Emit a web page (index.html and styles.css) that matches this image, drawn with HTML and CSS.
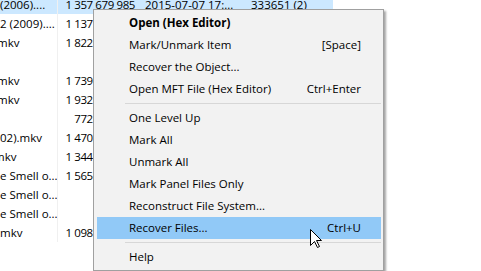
FILE: index.html
```html
<!DOCTYPE html>
<html lang="en">
<head>
    <meta charset="UTF-8">
    <title>Recover Files</title>
    <link rel="stylesheet" href="styles.css">
</head>
<body>
    <div class="file-list">
        <div class="row selected">
            <span class="name">(2006)....</span>
            <span class="size">1 357 679 985</span>
            <span class="date">2015-07-07 17:...</span>
            <span class="id">333651 (2)</span>
        </div>
        <div class="row">
            <span class="name">2 (2009)....</span>
            <span class="size">1 137 458 112</span>
        </div>
        <div class="row">
            <span class="name"><span class="cut">mkv</span></span>
            <span class="size">1 822 305 536</span>
        </div>
        <div class="row">
            <span class="name"></span>
            <span class="size"></span>
        </div>
        <div class="row">
            <span class="name"><span class="cut">mkv</span></span>
            <span class="size">1 739 210 752</span>
        </div>
        <div class="row">
            <span class="name"><span class="cut">mkv</span></span>
            <span class="size">1 932 476 416</span>
        </div>
        <div class="row">
            <span class="name"></span>
            <span class="size">772 403 200</span>
        </div>
        <div class="row">
            <span class="name">02).mkv</span>
            <span class="size">1 470 103 552</span>
        </div>
        <div class="row">
            <span class="name"><span class="cut-more">mkv</span></span>
            <span class="size">1 344 606 208</span>
        </div>
        <div class="row">
            <span class="name">e Smell o...</span>
            <span class="size">1 565 024 256</span>
        </div>
        <div class="row">
            <span class="name">e Smell o...</span>
            <span class="size">245 760</span>
        </div>
        <div class="row">
            <span class="name">e Smell o...</span>
            <span class="size">245 760</span>
        </div>
        <div class="row">
            <span class="name">mkv</span>
            <span class="size">1 098 514 432</span>
        </div>
    </div>

    <!-- context menu -->
    <div class="context-menu">
        <div class="menu-item default"><span>Open (Hex Editor)</span></div>
        <div class="menu-item"><span>Mark/Unmark Item</span><span class="key">[Space]</span></div>
        <div class="menu-item"><span>Recover the Object...</span></div>
        <div class="menu-item"><span>Open MFT File (Hex Editor)</span><span class="key">Ctrl+Enter</span></div>
        <div class="separator"></div>
        <div class="menu-item"><span>One Level Up</span></div>
        <div class="menu-item"><span>Mark All</span></div>
        <div class="menu-item"><span>Unmark All</span></div>
        <div class="menu-item"><span>Mark Panel Files Only</span></div>
        <div class="menu-item"><span>Reconstruct File System...</span></div>
        <div class="menu-item active"><span>Recover Files...</span><span class="key">Ctrl+U</span></div>
        <div class="separator"></div>
        <div class="menu-item"><span>Help</span></div>
    </div>

    <svg class="cursor" width="13" height="20" viewBox="0 0 13 20">
        <path d="M0.5 0.5 L0.5 16.5 L4.5 12.5 L7.5 18.5 L9.5 17.5 L6.5 11.5 L11.5 11.5 Z" fill="#fff" stroke="#000" stroke-width="1" stroke-linejoin="miter"/>
    </svg>
</body>
</html>
```

FILE: styles.css
```css
body {
    margin: 0;
    font-family: "Open Sans", "Noto Sans", sans-serif;
    font-size: 11.5px;
    color: #000;
    background-color: #fff;
    overflow: hidden;
}

.file-list {
    margin-top: -5px;
}

.row {
    display: grid;
    grid-template-columns: 58px 77px 114px 84px;
    width: 333px;
    height: 19px;
    line-height: 19px;
    white-space: nowrap;
}

.row.selected {
    background-color: #cce8ff;
}

.name {
    overflow: hidden;
    border-right: 1px solid #f0f0f0;
}

.cut {
    margin-left: -3px;
}

.cut-more {
    margin-left: -6px;
}

.size {
    text-align: right;
    letter-spacing: -0.4px;
}

.date {
    padding-left: 10px;
}

.id {
    padding-left: 2px;
}

.context-menu {
    position: absolute;
    left: 93px;
    top: 9px;
    width: 285px;
    padding: 2px;
    background-color: #f2f2f2;
    border: 1px solid #a0a0a0;
    box-shadow: 2px 2px 2px rgba(0, 0, 0, 0.35);
}

.menu-item {
    display: flex;
    justify-content: space-between;
    height: 22px;
    line-height: 22px;
    padding: 0 20px 0 32px;
    margin-left: 1px;
}

.menu-item.default {
    font-weight: bold;
}

.menu-item.active {
    background-color: #91c9f7;
}

.separator {
    height: 1px;
    margin: 3px 0 3px 29px;
    background-color: #d7d7d7;
}

.cursor {
    position: absolute;
    left: 310px;
    top: 229px;
}
```
